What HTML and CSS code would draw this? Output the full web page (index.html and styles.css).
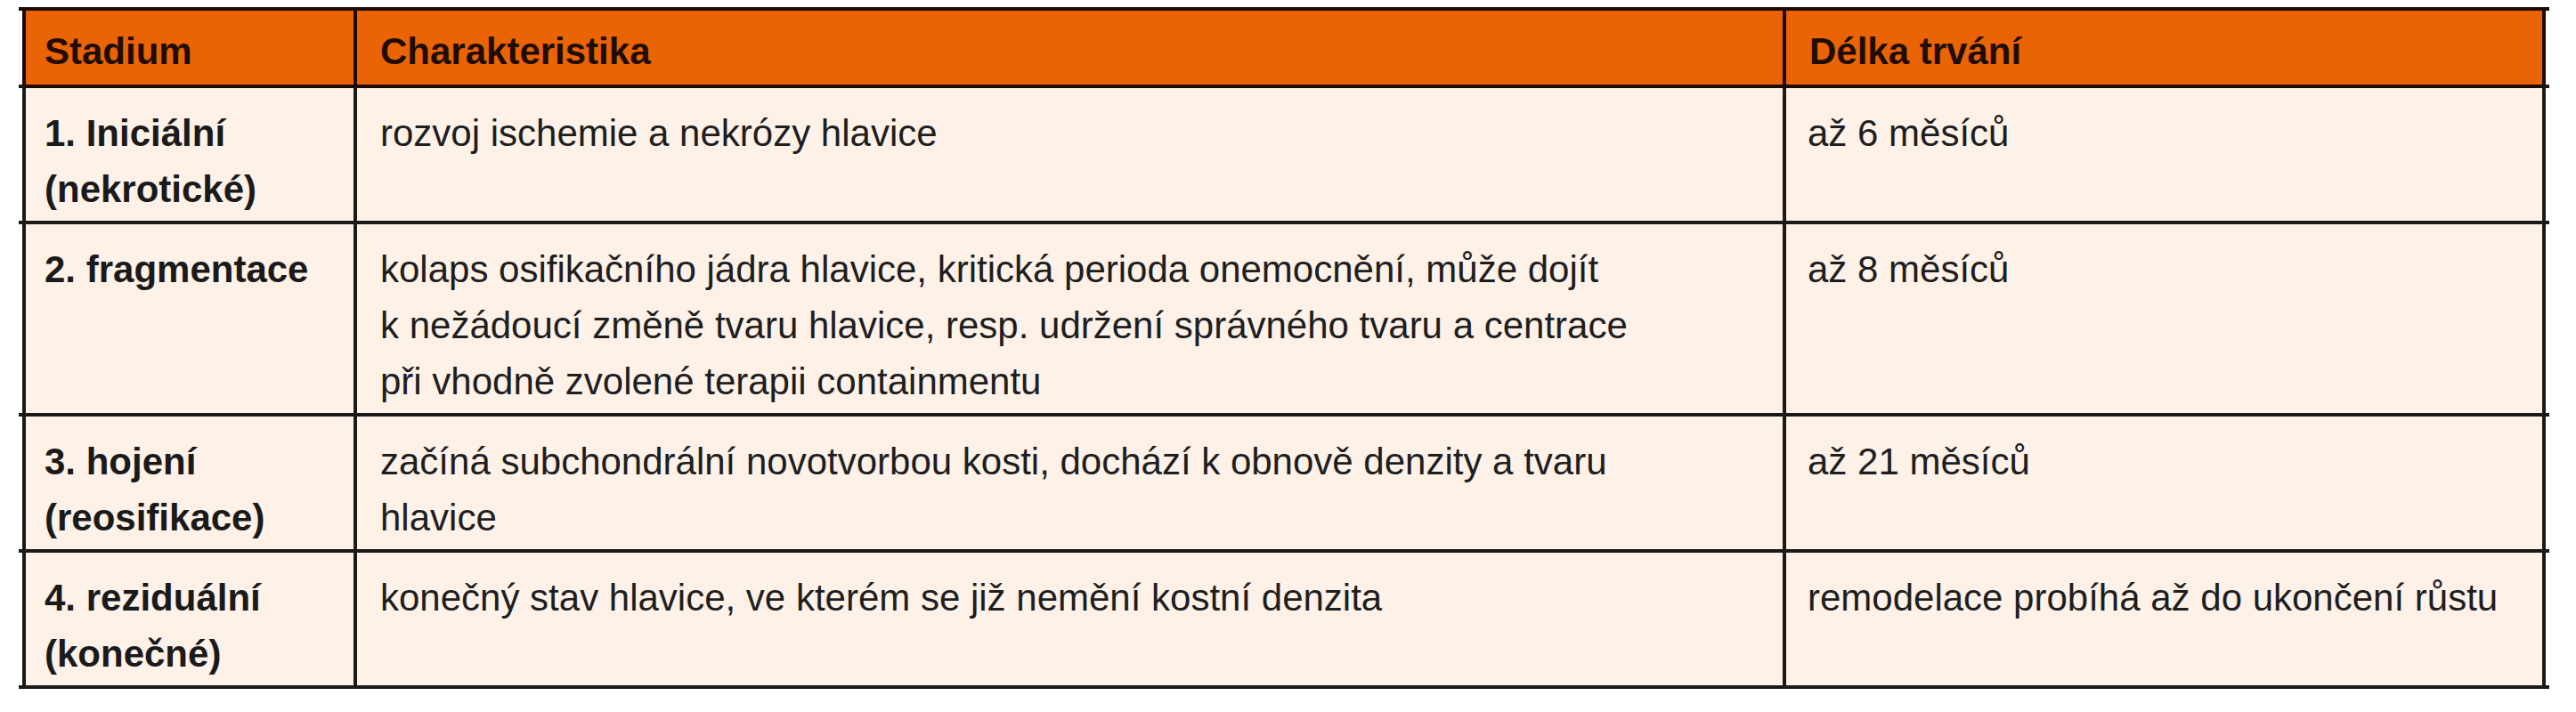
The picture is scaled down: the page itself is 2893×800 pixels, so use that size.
FILE: index.html
```html
<!DOCTYPE html>
<html lang="cs">
<head>
<meta charset="utf-8">
<title>Stadia onemocnění</title>
<link rel="stylesheet" href="styles.css">
</head>
<body>
<table class="stages">
  <colgroup>
    <col class="c-stage">
    <col class="c-desc">
    <col class="c-dur">
  </colgroup>
  <thead>
    <tr>
      <th class="first">Stadium</th>
      <th>Charakteristika</th>
      <th class="last">Délka trvání</th>
    </tr>
  </thead>
  <tbody>
    <tr>
      <td class="first stage">1. Iniciální<br>(nekrotické)</td>
      <td>rozvoj ischemie a nekrózy hlavice</td>
      <td class="last">až 6 měsíců</td>
    </tr>
    <tr>
      <td class="first stage">2. fragmentace</td>
      <td>kolaps osifikačního jádra hlavice, kritická perioda onemocnění, může dojít<br>k nežádoucí změně tvaru hlavice, resp. udržení správného tvaru a centrace<br>při vhodně zvolené terapii containmentu</td>
      <td class="last">až 8 měsíců</td>
    </tr>
    <tr>
      <td class="first stage">3. hojení<br>(reosifikace)</td>
      <td>začíná subchondrální novotvorbou kosti, dochází k obnově denzity a tvaru<br>hlavice</td>
      <td class="last">až 21 měsíců</td>
    </tr>
    <tr>
      <td class="first stage">4. reziduální<br>(konečné)</td>
      <td>konečný stav hlavice, ve kterém se již nemění kostní denzita</td>
      <td class="last">remodelace probíhá až do ukončení růstu</td>
    </tr>
  </tbody>
</table>
</body>
</html>
```

FILE: styles.css
```css
html, body {
  margin: 0;
  padding: 0;
  background: #ffffff;
}

body {
  font-family: "Liberation Sans", Arial, sans-serif;
  font-size: 42px;
  color: #1e1e1e;
}

.stages {
  margin: 8px 0 0 25px;
  border-collapse: separate;
  border-spacing: 0;
  table-layout: fixed;
  width: 2834px;
}

.c-stage { width: 376px; }
.c-desc { width: 1605px; }
.c-dur { width: 853px; }

.stages th,
.stages td {
  position: relative;
  text-align: left;
  vertical-align: top;
  line-height: 63px;
  border-right: 4px solid #1b1a17;
  border-bottom: 4px solid #1b1a17;
  white-space: nowrap;
}

.stages th {
  background: #ea6305;
  color: #1f0d03;
  font-weight: bold;
  padding: 14px 0 6px 26px;
  border-top: 4px solid #1f0a02;
  border-right-color: #1f0a02;
  border-bottom-color: #1f0a02;
}

.stages td {
  background: #fdf1e8;
  padding: 19px 0 4px 26px;
}

.stages .first {
  border-left: 4px solid #1b1a17;
  padding-left: 21px;
}

.stages th.first {
  border-left-color: #1f0a02;
}

.stages td.last {
  padding-left: 24px;
}

.stages th.last {
  padding-left: 26px;
}

.stages .stage {
  font-weight: bold;
  color: #1a1a1a;
}

/* horizontal rules overshoot the outer frame slightly */
.stages .first::before,
.stages .last::before {
  content: "";
  position: absolute;
  bottom: -4px;
  width: 8px;
  height: 4px;
  background: #1b1a17;
}

.stages .first::before { left: -8px; }
.stages .last::before { right: -8px; }

.stages th.first::after,
.stages th.last::after {
  content: "";
  position: absolute;
  top: -4px;
  width: 8px;
  height: 4px;
  background: #1f0a02;
}

.stages th.first::after { left: -8px; }
.stages th.last::after { right: -8px; }
```
